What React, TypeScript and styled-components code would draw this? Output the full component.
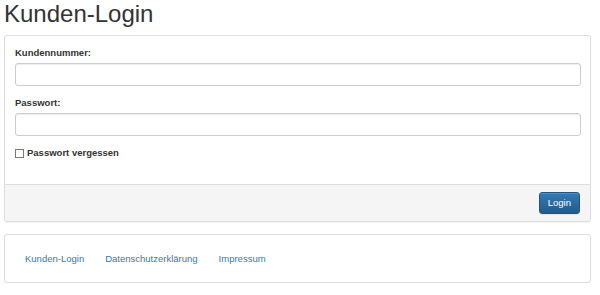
import React from "react";
import styled, { createGlobalStyle } from "styled-components";

const GlobalStyle = createGlobalStyle`
  html, body {
    margin: 0;
    padding: 0;
    background: #fff;
  }
  body {
    font-family: "Liberation Sans", Arial, Helvetica, sans-serif;
    font-size: 9.5px;
    line-height: 13.5px;
    color: #333;
  }
`;

const Page = styled.div`
  padding: 0 9px 0 4px;
`;

const Title = styled.h1`
  margin: 1px 0 8px;
  font-size: 24px;
  line-height: 26.4px;
  font-weight: 400;
  color: #333;
`;

const Panel = styled.div<{ $gap?: number }>`
  margin-bottom: ${(p) => p.$gap ?? 0}px;
  border: 1px solid #ddd;
  border-radius: 3px;
  background: #fff;
  box-shadow: 0 1px 1px rgba(0, 0, 0, 0.05);
  overflow: hidden;
`;

const PanelBody = styled.div`
  padding: 10px 9px 10px 10px;
`;

const FormGroup = styled.div`
  margin-bottom: 10px;
`;

const Label = styled.label`
  display: block;
  margin-bottom: 3.5px;
  font-weight: 700;
`;

const Input = styled.input`
  display: block;
  box-sizing: border-box;
  width: 100%;
  height: 23px;
  padding: 4px 8px;
  border: 1px solid #ccc;
  border-radius: 3px;
  box-shadow: inset 0 1px 1px rgba(0, 0, 0, 0.075);
  font: inherit;
  outline: none;
`;

const CheckRow = styled.label`
  display: flex;
  align-items: center;
  gap: 3px;
  margin-bottom: 14px;
  font-weight: 700;
`;

const Box = styled.input`
  appearance: none;
  margin: 0;
  width: 9px;
  height: 9px;
  border: 1px solid #7a7a7a;
  background: #fff;
  box-sizing: border-box;
`;

const PanelFooter = styled.div`
  display: flex;
  justify-content: flex-end;
  padding: 7px 10px 7px 10px;
  background: #f5f5f5;
  border-top: 1px solid #ddd;
`;

const Button = styled.button`
  height: 22px;
  padding: 0 8px;
  border: 1px solid #245580;
  border-radius: 3px;
  background: linear-gradient(to bottom, #337ab7 0%, #265a88 100%);
  color: #fff;
  font: inherit;
  cursor: pointer;
  box-shadow: inset 0 1px 0 rgba(255, 255, 255, 0.15), 0 1px 1px rgba(0, 0, 0, 0.075);
`;

const NavBody = styled.div`
  padding: 10px;
`;

const Nav = styled.ul`
  display: flex;
  gap: 1px;
  margin: 0;
  padding: 0;
  list-style: none;
`;

const NavLink = styled.a`
  display: block;
  padding: 7px 10px;
  color: #337ab7;
  text-decoration: none;
`;

const links = ["Kunden-Login", "Datenschutzerklärung", "Impressum"];

export default function App() {
  return (
    <Page>
      <GlobalStyle />
      <Title>Kunden-Login</Title>
      <Panel $gap={12}>
        <PanelBody>
          <FormGroup>
            <Label htmlFor="kdnr">Kundennummer:</Label>
            <Input id="kdnr" type="text" />
          </FormGroup>
          <FormGroup>
            <Label htmlFor="pw">Passwort:</Label>
            <Input id="pw" type="password" />
          </FormGroup>
          <CheckRow>
            <Box type="checkbox" />
            Passwort vergessen
          </CheckRow>
        </PanelBody>
        <PanelFooter>
          <Button type="button">Login</Button>
        </PanelFooter>
      </Panel>
      <Panel>
        <NavBody>
          <Nav>
            {links.map((l) => (
              <li key={l}>
                <NavLink href="#">{l}</NavLink>
              </li>
            ))}
          </Nav>
        </NavBody>
      </Panel>
    </Page>
  );
}
